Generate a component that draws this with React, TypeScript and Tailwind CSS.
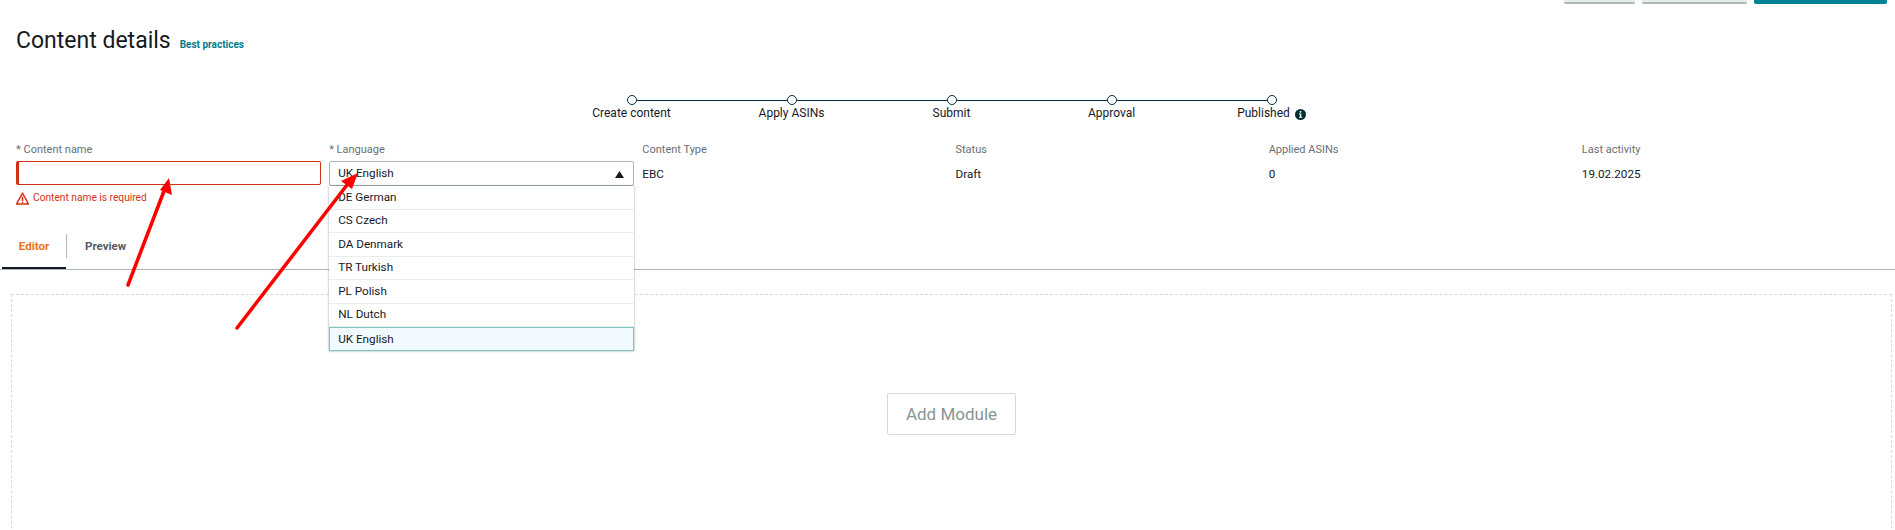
import React from "react";

const steps = ["Create content", "Apply ASINs", "Submit", "Approval", "Published"];
const languages = ["DE German", "CS Czech", "DA Denmark", "TR Turkish", "PL Polish", "NL Dutch", "UK English"];

const Label = ({text}: { text: string }) => (
    <p className="text-[11px] leading-[16px] text-[#687078]">{text}</p>
);

const InfoColumn = ({label, value}: { label: string; value: string }) => (
    <div>
        <Label text={label}/>
        <p className="mt-[4px] h-[24px] text-[11.7px] leading-[24px] text-[#16191f]">{value}</p>
    </div>
);

const Stepper = () => (
    <div className="mt-[38px] flex justify-center pl-2">
        {steps.map((step, index) => (
            <div key={step} className="flex w-[160px] flex-col items-center">
                <div className="flex w-full items-center">
                    <div className={`h-px flex-1 ${index === 0 ? "" : "bg-[#002f36]"}`}/>
                    <div className="h-[10px] w-[10px] rounded-full border-[1.5px] border-[#002f36] bg-white"/>
                    <div className={`h-px flex-1 ${index === steps.length - 1 ? "" : "bg-[#002f36]"}`}/>
                </div>
                <div className="flex items-center gap-[5px] text-[12px] leading-[16px] text-[#16191f]">
                    {step}
                    {step === "Published" && (
                        <svg width="11" height="11" viewBox="0 0 11 11" className="mt-[2px]">
                            <circle cx="5.5" cy="5.5" r="5.5" fill="#002f36"/>
                            <rect x="4.7" y="2" width="1.6" height="1.6" fill="#ffffff"/>
                            <path d="M4 4.5 H6.3 V7.8 H7.2 V8.8 H4 V7.8 H4.9 V5.5 H4 Z" fill="#ffffff"/>
                        </svg>
                    )}
                </div>
            </div>
        ))}
    </div>
);

const LanguageSelect = () => (
    <div className="relative w-[305px]">
        <div className="flex h-[25px] items-center justify-between rounded-[2px] border border-[#aab7b8] px-[8px] pt-[1px] text-[11.7px] text-[#16191f]">
            <span>UK English</span>
            <svg width="9" height="7" viewBox="0 0 9 7" className="mr-[1px] fill-[#16191f]">
                <path d="M4.5 0 L9 7 H0 Z"/>
            </svg>
        </div>
        <ul className="absolute left-0 top-full z-10 w-full bg-white text-[11.7px] text-[#16191f] shadow-[0_0_2px_rgba(0,28,36,0.45)]">
            {languages.map((language) => (
                language === "UK English" ? (
                    <li key={language}
                        className="flex h-[24px] items-center border-[1.5px] border-[#7fc4c0] bg-[#f1faff] px-[8px] pt-[1px]">
                        {language}
                    </li>
                ) : (
                    <li key={language} className="flex h-[23.5px] items-center border-b border-[#eaeded] px-[9px] pt-[1px]">
                        {language}
                    </li>
                )
            ))}
        </ul>
    </div>
);

const Arrows = () => (
    <svg className="absolute inset-0 z-20" width="1895" height="530" viewBox="0 0 1895 530">
        <path d="M128 285 L164 191" stroke="#ff0000" strokeWidth="3.5" strokeLinecap="round" fill="none"/>
        <path d="M169 178 L172 195 L160 190 Z" fill="#ff0000"/>
        <path d="M237 328 L347 185" stroke="#ff0000" strokeWidth="3.5" strokeLinecap="round" fill="none"/>
        <path d="M358 173 L352 189 L341 181 Z" fill="#ff0000"/>
    </svg>
);

const App = () => {
    return (
        <div className="relative h-[530px] w-[1895px] overflow-hidden bg-white font-['Roboto',sans-serif]">
            <div className="flex h-[4px] items-end justify-end gap-[7px] overflow-hidden pr-[8px]">
                <div className="h-[20px] w-[71px] shrink-0 rounded-[2px] border-b-2 border-[#aab7b8] bg-[#e9eded]"/>
                <div className="h-[20px] w-[105px] shrink-0 rounded-[2px] border-b-2 border-[#aab7b8] bg-[#e9eded]"/>
                <div className="h-[20px] w-[133px] shrink-0 rounded-[2px] bg-[#008296]"/>
            </div>

            <div className="mt-[21px] flex items-baseline pl-[16px]">
                <h1 className="text-[23px] leading-[32px] text-[#16191f]">Content details</h1>
                <a className="ml-[9px] text-[10px] font-bold text-[#007d8c]">Best practices</a>
            </div>

            <Stepper/>

            <div className="mt-[21px] grid grid-cols-6 pl-[16px]">
                <div>
                    <Label text="* Content name"/>
                    <div className="mt-[3px] h-[24px] w-[305px] rounded-[2px] border border-l-[3px] border-[#d13212]"/>
                    <div className="mt-[5px] flex items-center gap-[4px] text-[10.2px] leading-[16px] text-[#d13212]">
                        <svg width="13" height="13" viewBox="0 0 13 13" fill="none" stroke="#d13212" strokeWidth="1.5">
                            <path d="M6.5 1 L12.4 12 H0.6 Z" strokeLinejoin="round"/>
                            <path d="M6.5 4.5 V9 M6.5 9.8 V11.2"/>
                        </svg>
                        Content name is required
                    </div>
                </div>
                <div>
                    <Label text="* Language"/>
                    <div className="mt-[3px]">
                        <LanguageSelect/>
                    </div>
                </div>
                <InfoColumn label="Content Type" value="EBC"/>
                <InfoColumn label="Status" value="Draft"/>
                <InfoColumn label="Applied ASINs" value="0"/>
                <InfoColumn label="Last activity" value="19.02.2025"/>
            </div>

            <div className="mt-[28px] flex h-[36px] border-b border-[#aab7b8]">
                <div className="ml-[2px] flex h-[35px] w-[64px] justify-center border-b-2 border-[#16191f] pt-[3px] text-[11.5px] font-bold leading-[18px] text-[#ec7211]">
                    Editor
                </div>
                <div className="h-[24px] w-px bg-[#aab7b8]"/>
                <div className="ml-[18px] pt-[3px] text-[11.5px] font-bold leading-[18px] text-[#545b64]">Preview</div>
            </div>

            <div className="ml-[11px] mr-[3px] mt-[24px] flex h-[300px] justify-center border border-dashed border-[#d5dbdb] pt-[98px]">
                <button className="h-[42px] w-[129px] rounded-[2px] border border-[#d5dbdb] bg-white pt-[1px] text-[17px] text-[#879596]">
                    Add Module
                </button>
            </div>

            <Arrows/>
        </div>
    );
};

export default App;
